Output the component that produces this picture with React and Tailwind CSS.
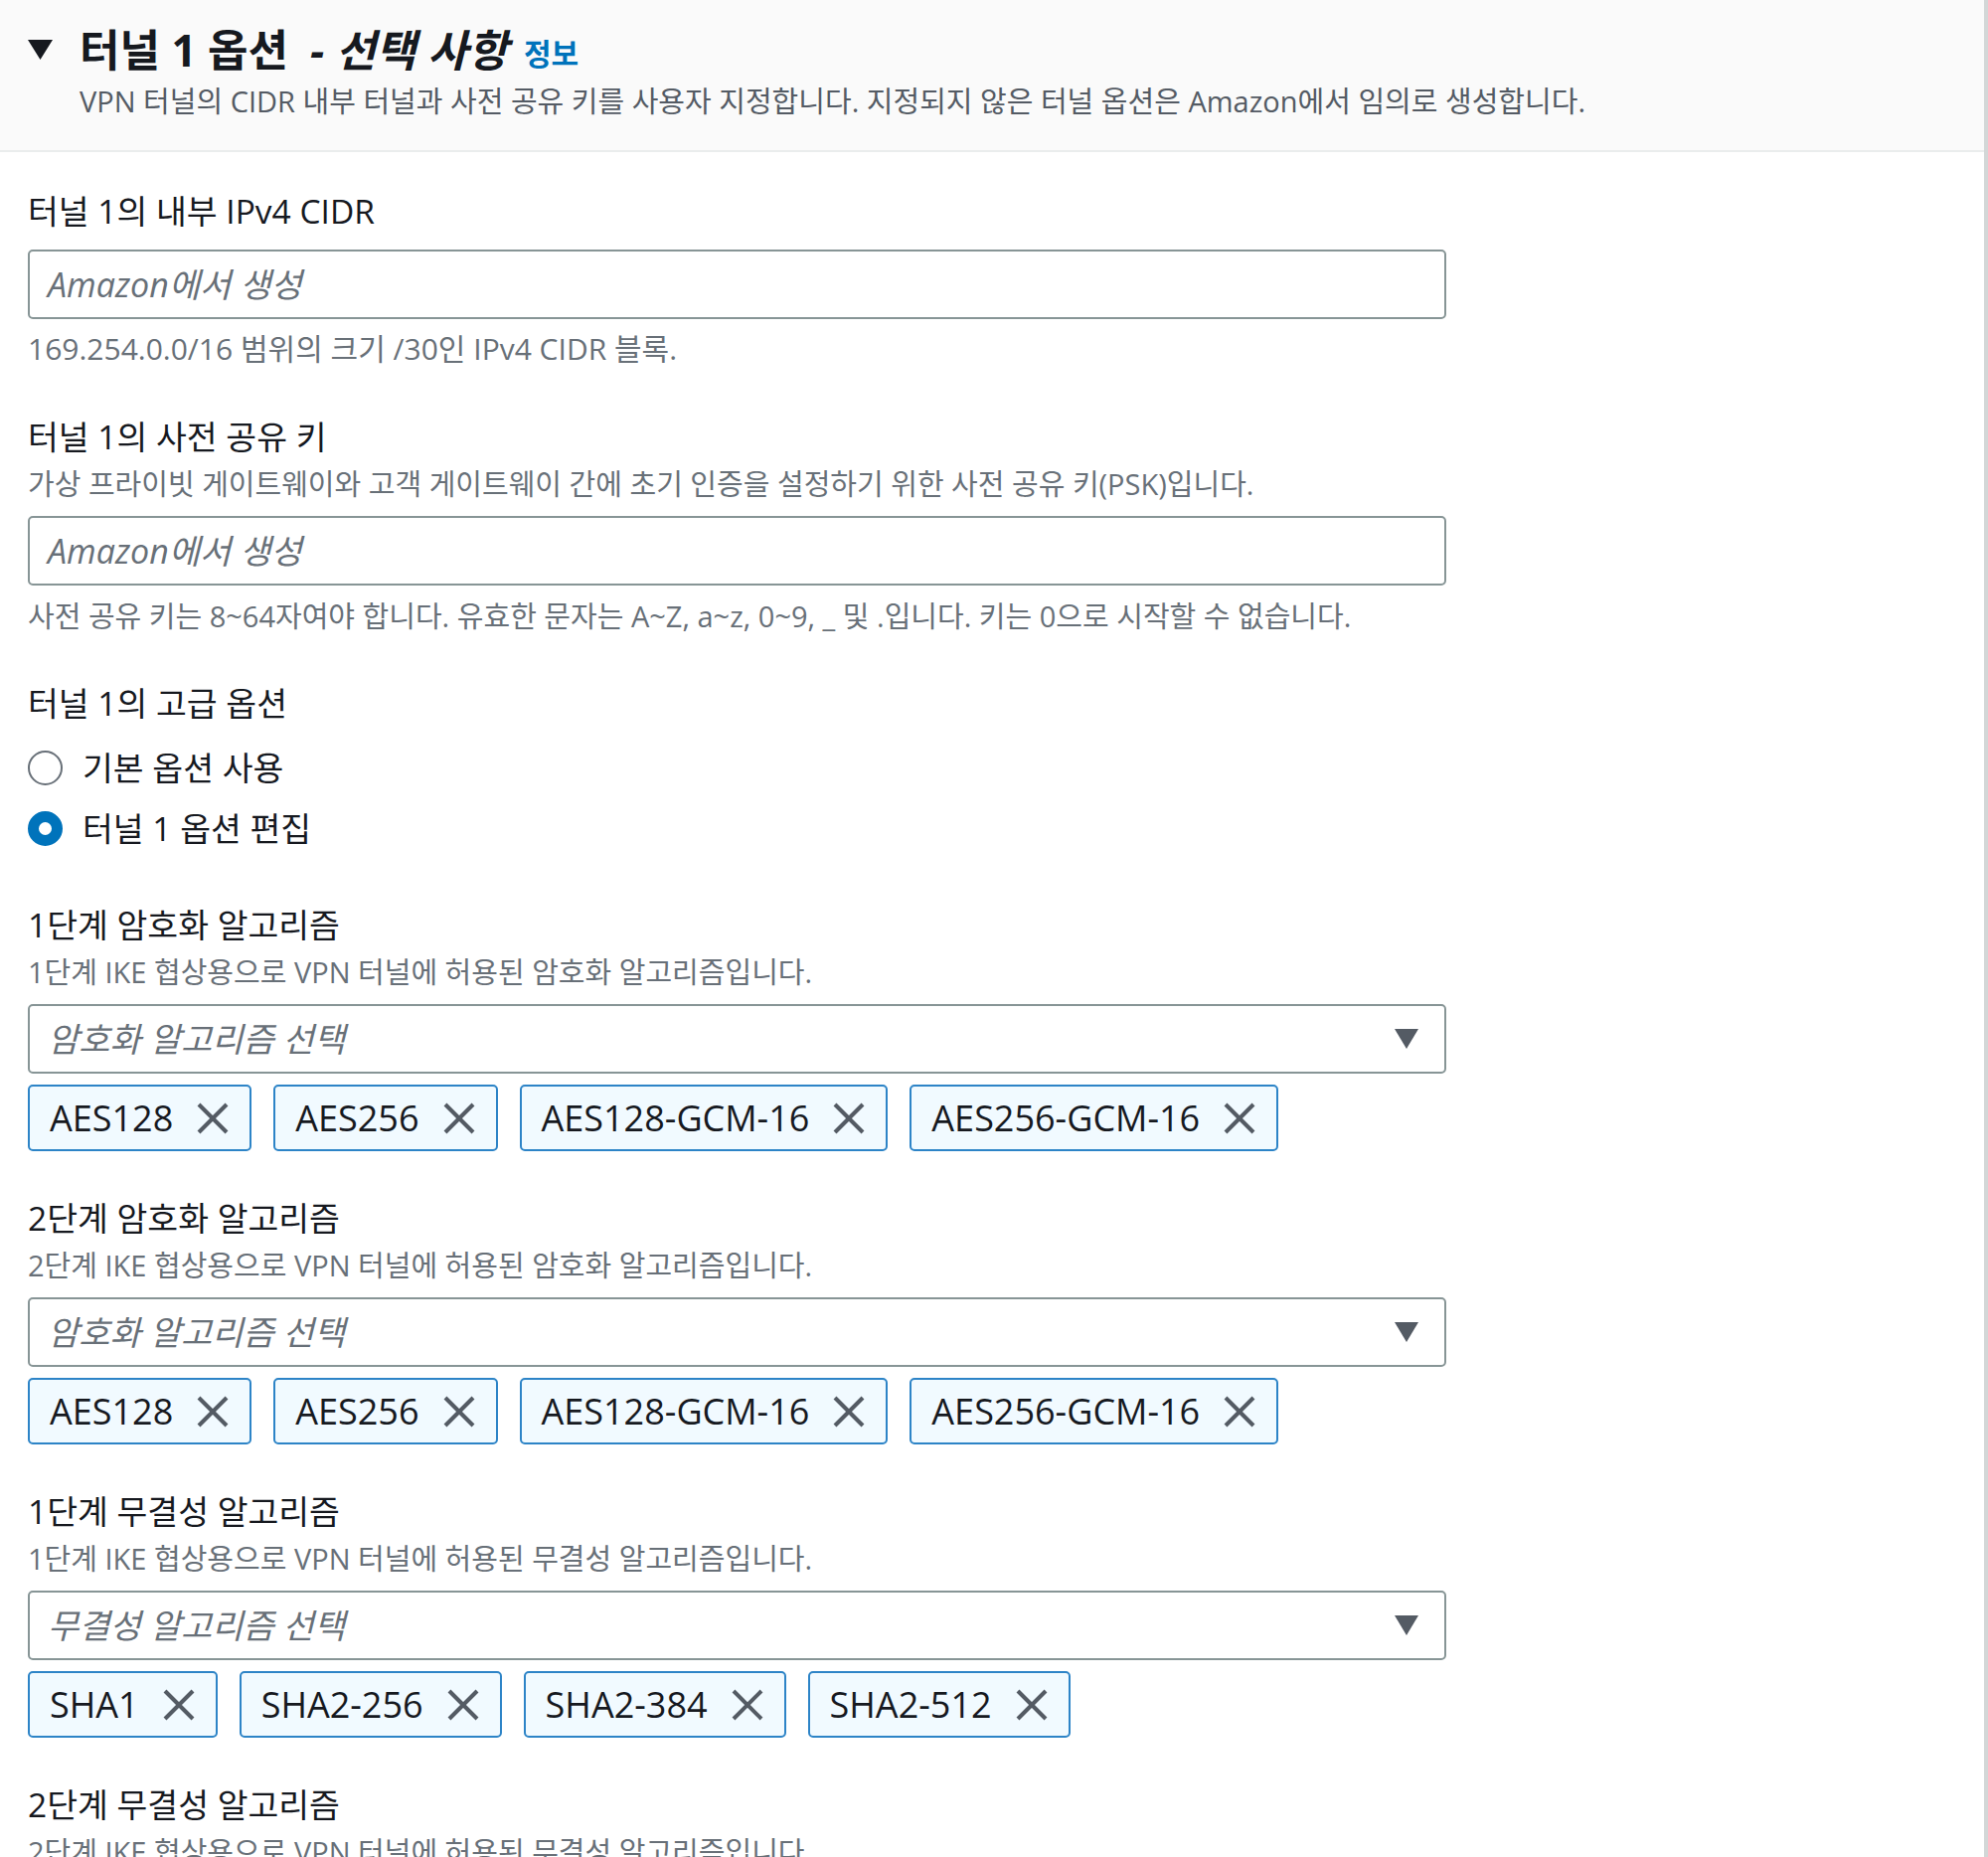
import React from "react";

const FONT = { fontFamily: '"Open Sans", "Noto Sans CJK KR", sans-serif' };

function XIcon() {
  return (
    <svg width="34" height="34" viewBox="0 0 34 34" className="shrink-0">
      <line x1="3" y1="3" x2="31" y2="31" stroke="#545b64" strokeWidth="4" />
      <line x1="31" y1="3" x2="3" y2="31" stroke="#545b64" strokeWidth="4" />
    </svg>
  );
}

function Tag({ label }) {
  return (
    <div className="flex h-[67px] items-center gap-[23px] rounded-[5px] border-2 border-[#2d84c7] bg-[#f1faff] pl-[20px] pr-[20px]">
      <span className="text-[36px] font-medium leading-none text-[#16191f]">{label}</span>
      <XIcon />
    </div>
  );
}

function Dropdown({ placeholder }) {
  return (
    <div className="flex h-[70px] w-[1427px] items-center justify-between rounded-[5px] border-2 border-[#879596] bg-white pl-[18px] pr-[26px]">
      <span className="text-[34px] italic text-[#687078]">{placeholder}</span>
      <svg width="24" height="20" viewBox="0 0 24 20">
        <polygon points="0,0 24,0 12,20" fill="#545b64" />
      </svg>
    </div>
  );
}

function Label({ children, className = "" }) {
  return (
    <div className={"h-[40px] text-[33.5px] font-normal leading-[40px] text-[#16191f] " + className}>{children}</div>
  );
}

function Hint({ children, className = "" }) {
  return (
    <div className={"h-[36px] text-[29px] leading-[36px] text-[#687078] " + className}>{children}</div>
  );
}

function AlgoSection({ title, desc, placeholder, tags, last }) {
  return (
    <div className={last ? "" : "pb-[47px]"}>
      <Label>{title}</Label>
      <Hint className="mt-[10px]">{desc}</Hint>
      <div className="mt-[14px]">
        <Dropdown placeholder={placeholder} />
      </div>
      {tags && (
        <div className="mt-[11px] flex gap-[22px]">
          {tags.map((t) => (
            <Tag key={t} label={t} />
          ))}
        </div>
      )}
    </div>
  );
}

export default function App() {
  const aes = ["AES128", "AES256", "AES128-GCM-16", "AES256-GCM-16"];
  const sha = ["SHA1", "SHA2-256", "SHA2-384", "SHA2-512"];
  return (
    <div style={FONT} className="h-[1868px] w-full overflow-hidden border-r-4 border-[#d3d7d7] bg-white">
      {/* Header */}
      <div className="border-b-2 border-[#eaeded] bg-[#fafafa] pb-[31px] pl-[28px] pt-[22px]">
        <div className="flex h-[56px] items-center">
          <svg width="25" height="20" viewBox="0 0 25 20" className="shrink-0">
            <polygon points="0,0 25,0 12.5,20" fill="#16191f" />
          </svg>
          <h2 className="ml-[27px] text-[44px] font-bold leading-[56px] text-[#16191f]">
            터널 1 옵션
            <span className="ml-[22px] italic">- 선택 사항</span>
          </h2>
          <span className="ml-[16px] mt-[6px] text-[30px] font-bold text-[#0073bb]">정보</span>
        </div>
        <div className="mt-[6px] pl-[52px] text-[29px] leading-[36px] text-[#545b64]">
          VPN 터널의 CIDR 내부 터널과 사전 공유 키를 사용자 지정합니다. 지정되지 않은 터널 옵션은 Amazon에서 임의로 생성합니다.
        </div>
      </div>

      {/* Body */}
      <div className="pl-[28px] pt-[39px]">
        <Label>터널 1의 내부 IPv4 CIDR</Label>
        <div className="mt-[19px] flex h-[70px] w-[1427px] items-center rounded-[5px] border-2 border-[#879596] pl-[18px]">
          <span className="text-[34px] italic text-[#687078]">Amazon에서 생성</span>
        </div>
        <Hint className="mt-[12px] text-[30px]">169.254.0.0/16 범위의 크기 /30인 IPv4 CIDR 블록.</Hint>

        <Label className="mt-[50px]">터널 1의 사전 공유 키</Label>
        <Hint className="mt-[10px]">
          가상 프라이빗 게이트웨이와 고객 게이트웨이 간에 초기 인증을 설정하기 위한 사전 공유 키(PSK)입니다.
        </Hint>
        <div className="mt-[14px] flex h-[70px] w-[1427px] items-center rounded-[5px] border-2 border-[#879596] pl-[18px]">
          <span className="text-[34px] italic text-[#687078]">Amazon에서 생성</span>
        </div>
        <Hint className="mt-[13px]">
          사전 공유 키는 8~64자여야 합니다. 유효한 문자는 A~Z, a~z, 0~9, _ 및 .입니다. 키는 0으로 시작할 수 없습니다.
        </Hint>

        <Label className="mt-[49px]">터널 1의 고급 옵션</Label>
        <div className="mt-[23px] flex h-[44px] items-center gap-[20px]">
          <span className="h-[35px] w-[35px] shrink-0 rounded-full border-2 border-[#687078] bg-white" />
          <span className="text-[33.5px] text-[#16191f]">기본 옵션 사용</span>
        </div>
        <div className="mt-[17px] flex h-[44px] items-center gap-[20px]">
          <span className="h-[35px] w-[35px] shrink-0 rounded-full border-[11px] border-[#0073bb] bg-white" />
          <span className="text-[33.5px] text-[#16191f]">터널 1 옵션 편집</span>
        </div>

        <div className="mt-[55px]">
          <AlgoSection
            title="1단계 암호화 알고리즘"
            desc="1단계 IKE 협상용으로 VPN 터널에 허용된 암호화 알고리즘입니다."
            placeholder="암호화 알고리즘 선택"
            tags={aes}
          />
          <AlgoSection
            title="2단계 암호화 알고리즘"
            desc="2단계 IKE 협상용으로 VPN 터널에 허용된 암호화 알고리즘입니다."
            placeholder="암호화 알고리즘 선택"
            tags={aes}
          />
          <AlgoSection
            title="1단계 무결성 알고리즘"
            desc="1단계 IKE 협상용으로 VPN 터널에 허용된 무결성 알고리즘입니다."
            placeholder="무결성 알고리즘 선택"
            tags={sha}
          />
          <AlgoSection
            title="2단계 무결성 알고리즘"
            desc="2단계 IKE 협상용으로 VPN 터널에 허용된 무결성 알고리즘입니다."
            placeholder="무결성 알고리즘 선택"
            last
          />
        </div>
      </div>
    </div>
  );
}
